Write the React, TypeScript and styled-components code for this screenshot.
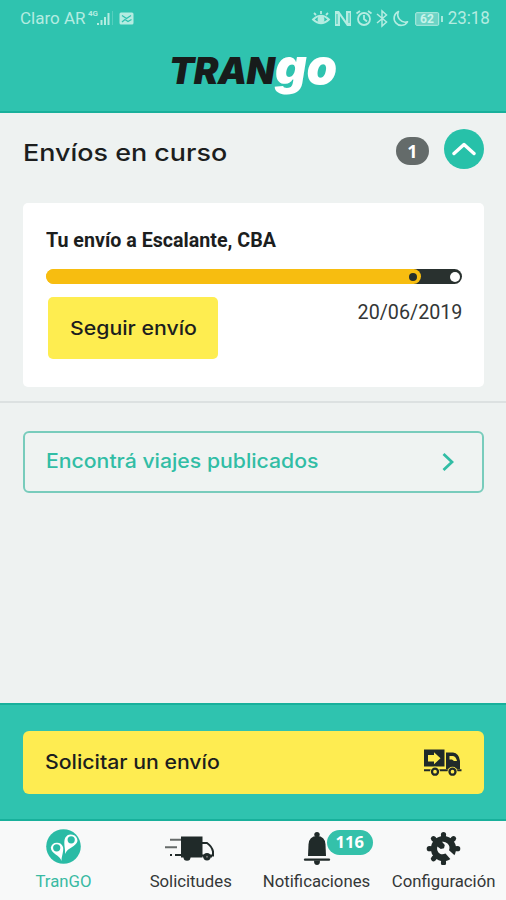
import React from "react";
import styled, { createGlobalStyle } from "styled-components";

const teal = "#2fc3af";
const ink = "#202a29";

const GlobalStyle = createGlobalStyle`
  *, *::before, *::after { box-sizing: border-box; }
  body { margin: 0; background: #eef2f1; }
  button { border: 0; padding: 0; text-align: left; color: inherit; cursor: pointer; }
  svg { display: block; flex: none; }
`;

const Screen = styled.div`
  width: 506px;
  height: 900px;
  display: flex;
  flex-direction: column;
  background: #eef2f1;
  color: #1c1e1e;
  font-family: Roboto, sans-serif;
  overflow: hidden;
`;

const Header = styled.header`
  height: 113px;
  background: ${teal};
  border-bottom: 2px solid #18b09b;
`;

const StatusBar = styled.div`
  height: 36px;
  padding: 0 16px 0 20px;
  display: flex;
  align-items: center;
  justify-content: space-between;
  color: #b4ece1;
`;

const StatusGroup = styled.div`
  display: flex;
  align-items: center;
`;

const Label = styled.span<{ $size: number; $weight?: number; $stretch?: number; $font?: string; $origin?: string }>`
  display: inline-block;
  margin: 0;
  white-space: nowrap;
  font-family: ${(p) => p.$font ?? "Roboto"}, sans-serif;
  font-size: ${(p) => p.$size}px;
  font-weight: ${(p) => p.$weight ?? 400};
  line-height: 1.2;
  transform: scaleX(${(p) => p.$stretch ?? 1});
  transform-origin: ${(p) => p.$origin ?? "left"} center;
`;

const Logo = styled.h1`
  margin: 6px 0 0 169px;
  height: 50px;
  display: flex;
  align-items: baseline;
  line-height: 50px;
  font-family: Inter, sans-serif;
  font-style: italic;
`;

const LogoDark = styled.span`
  width: 106px;
  font-size: 37px;
  font-weight: 900;
  letter-spacing: -0.7px;
  color: #171c1b;
`;

const LogoLight = styled.span`
  font-size: 49px;
  font-weight: 900;
  letter-spacing: -0.2px;
  color: #fff;
`;

const Shipments = styled.section`
  height: 290px;
  padding: 0 22px 0 23px;
  border-bottom: 2px solid #dce1e1;
`;

const SectionHead = styled.div`
  height: 90px;
  padding-bottom: 10px;
  display: flex;
  align-items: center;
`;

const Count = styled.span`
  width: 33px;
  height: 28px;
  margin: -5px 15px 0 auto;
  border-radius: 14px;
  display: grid;
  place-items: center;
  background: #646b6a;
  color: #fff;
  font: 700 18px/1 "Noto Sans", sans-serif;
`;

const Collapse = styled.button`
  width: 40px;
  height: 40px;
  margin-top: -8px;
  border-radius: 50%;
  display: grid;
  place-items: center;
  background: #27c1a9;
`;

const Card = styled.article`
  height: 184px;
  padding: 26px 22px 0 23px;
  border-radius: 5px;
  background: #fff;
`;

const Track = styled.div`
  height: 15px;
  margin-top: 17px;
  border-radius: 8px;
  display: flex;
  align-items: center;
  justify-content: space-between;
  padding-right: 2px;
  overflow: hidden;
  background: linear-gradient(to right, #f7bd10 50%, #29312f 50%);
`;

const Progress = styled.div`
  width: 375px;
  height: 15px;
  padding-right: 4px;
  border-radius: 8px;
  display: flex;
  align-items: center;
  justify-content: flex-end;
  background: #f7bd10;
`;

const Dot = styled.span<{ $size: number; $color: string }>`
  width: ${(p) => p.$size}px;
  height: ${(p) => p.$size}px;
  border-radius: 50%;
  background: ${(p) => p.$color};
`;

const CardFoot = styled.div`
  margin-top: 13px;
  display: flex;
  justify-content: space-between;
  align-items: flex-start;
`;

const FollowButton = styled.button`
  width: 170px;
  height: 62px;
  margin-left: 2px;
  padding: 3px 0 0 22px;
  border-radius: 5px;
  background: #feed50;
`;

const DateText = styled.time`
  margin-top: 3px;
  color: #333636;
`;

const Discover = styled.section`
  flex: 1;
  padding: 28px 22px 0 23px;
`;

const OutlineButton = styled.button`
  width: 100%;
  height: 62px;
  padding: 0 28px 0 21px;
  border: 2px solid #78ccbc;
  border-radius: 6px;
  display: flex;
  align-items: center;
  justify-content: space-between;
  background: #eff3f2;
  color: #31bda5;
`;

const ActionBar = styled.section`
  height: 118px;
  padding: 26px 22px 0 23px;
  border-top: 2px solid #18b09b;
  border-bottom: 2px solid #18b09b;
  background: ${teal};
`;

const RequestButton = styled.button`
  width: 100%;
  height: 63px;
  padding: 1px 22px 0;
  border-radius: 6px;
  display: flex;
  align-items: center;
  justify-content: space-between;
  background: #feec51;
`;

const Nav = styled.nav`
  height: 79px;
  display: grid;
  grid-template-columns: repeat(4, 1fr);
  background: #f8f9f9;
`;

const NavItem = styled.a<{ $active?: boolean }>`
  display: flex;
  flex-direction: column;
  align-items: center;
  padding-left: 1px;
  color: ${(p) => (p.$active ? "#39baa3" : "#343737")};
`;

const NavIcon = styled.span`
  position: relative;
  height: 50px;
  padding-top: 8px;
`;

const Badge = styled.span`
  position: absolute;
  left: 24px;
  top: 9px;
  width: 46px;
  height: 25px;
  border-radius: 13px;
  display: grid;
  place-items: center;
  background: #34c1aa;
  color: #fff;
  font: 700 16.5px/1 "Noto Sans", sans-serif;
`;

const SignalIcon = () => (
  <svg width="50" height="20" viewBox="0 0 50 20" fill="currentColor">
    <text x="2" y="8" fontFamily="Roboto, sans-serif" fontSize="8" fontWeight="700">4G</text>
    <rect x="11" y="15" width="2" height="2" />
    <rect x="14.5" y="12" width="2" height="5" />
    <rect x="18" y="9" width="2" height="8" />
    <rect x="21.5" y="5" width="2" height="12" />
    <rect x="26" y="3" width="1" height="14" opacity=".3" />
    <rect x="33.5" y="4.5" width="14" height="12" rx="1.5" />
    <path d="M36 7.5 L40.5 10.5 L45 7.5 M36 14 L39 11.5 L42 13.5 L45.5 11.5" fill="none" stroke={teal} strokeWidth="1.3" />
  </svg>
);

const SystemIcons = () => (
  <svg width="134" height="20" viewBox="310 0 134 20" fill="none" stroke="currentColor" strokeWidth="1.8">
    <path d="M312 11.5 Q320 4 328 11.5 Q320 19 312 11.5Z" />
    <circle cx="320" cy="11.5" r="2.5" fill="currentColor" />
    <path d="M313 5 L315 7 M320 3 V6 M327 5 L325 7" />
    <path d="M334 3 H338 L345 13 V3 H350 V18 H346 L339 8 V18 H334Z" fill="currentColor" stroke="none" />
    <path d="M336 6 V16 M348 5 V15" stroke={teal} strokeWidth="1" />
    <circle cx="363" cy="11" r="6" />
    <path d="M363 7 V11 L366 13.5 M355.5 5.5 L359 3 M367 3 L370.5 5.5" />
    <path d="M376 6 L385.5 14 L381 18 V3 L385.5 7 L376 15" strokeWidth="1.5" />
    <path d="M397.5 3.5 A7.2 7.2 0 1 0 406.5 13.8 A7.5 7.5 0 0 1 397.5 3.5Z" strokeWidth="1.6" strokeLinejoin="round" />
    <rect x="414.7" y="4.7" width="23" height="12.6" rx="1" strokeWidth="1" fill="#6bd3c5" />
    <path d="M441 8 V14" />
    <text x="419" y="15.2" fontFamily="Roboto, sans-serif" fontSize="12" fontWeight="700" fill="#c8f3ea" stroke="none">62</text>
  </svg>
);

const DeliveryTruck = () => (
  <svg width="38" height="28" viewBox="0 0 38 28">
    <rect x="0" y="0.5" width="20.5" height="17" fill={ink} />
    <path d="M4 6 H10 V3.3 L16.5 9.3 L10 15.3 V12.5 H4Z" fill="#feec51" />
    <path d="M22 3.5 H29 Q35 4 36 12 V20 H22Z" fill={ink} />
    <path d="M25.5 7 H29 Q32 7.5 33 12 H30 L28 10.5 H25.5Z" fill="#feec51" />
    <path d="M0 21.3 H37.5" stroke={ink} strokeWidth="2" />
    <g fill="#feec51" stroke={ink} strokeWidth="2.3">
      <circle cx="11" cy="22.7" r="5" stroke="none" />
      <circle cx="28.5" cy="22.7" r="5" stroke="none" />
      <circle cx="11" cy="22.7" r="3" />
      <circle cx="28.5" cy="22.7" r="3" />
    </g>
  </svg>
);

const PinsIcon = () => (
  <svg width="35" height="35" viewBox="0 0 35 35">
    <circle cx="17.5" cy="17.5" r="17.3" fill="#2abba5" />
    <path d="M15.5 32 C14 26 5 25 4.8 18.5 A6.4 6.4 0 0 1 17 18 C18 22 15.5 27 15.5 32Z" fill="#fff" />
    <path d="M19 25 C19.7 20 17 14 19.2 8.8 A6.6 6.6 0 0 1 31.5 12 C30 18 22 18 19 25Z" fill="#fff" />
    <circle cx="10.7" cy="18.8" r="3.6" fill="#2abba5" />
    <circle cx="25.2" cy="10.8" r="3.6" fill="#2abba5" />
  </svg>
);

const FastTruck = () => (
  <svg width="50" height="36" viewBox="0 0 50 36" fill="none" stroke={ink}>
    <rect x="16" y="7.5" width="21.5" height="21" fill={ink} stroke="none" />
    <path d="M5 10.8 H16 M0 18.3 H12" stroke="#666b6a" strokeWidth="2" />
    <path d="M5 26 H7 M10 26 H17" strokeWidth="2" />
    <path d="M37 14 H42 Q47 17.5 48 22.5 V26.5 H37" strokeWidth="2" />
    <path d="M38 27.5 H47" strokeWidth="2" />
    <circle cx="22" cy="28.3" r="3.5" fill={ink} stroke="none" />
    <circle cx="42" cy="27.8" r="3.7" fill={ink} stroke="none" />
    <circle cx="42" cy="27.8" r="1" fill="#777" stroke="none" />
  </svg>
);

const BellIcon = () => (
  <svg width="28" height="36" viewBox="0 0 28 36" fill={ink}>
    <circle cx="14" cy="5.6" r="2.7" />
    <path d="M5 27 L5.5 15.5 Q6 7 14 7 Q22 7 22.5 15.5 L23 27Z" />
    <path d="M1.5 29.6 H26.5 Q28 30.8 26.5 31.8 H1.5 Q0 30.8 1.5 29.6Z" />
    <path d="M11 31.4 H17 Q17 36 14 36 Q11 36 11 31.4Z" />
  </svg>
);

const GearIcon = () => (
  <svg width="35" height="36" viewBox="0 0 35 36">
    <circle cx="17.5" cy="19.7" r="12.6" fill={ink} />
    {[0, 45, 90, 180, 225, 270, 315].map((a) => (
      <g key={a} transform={`rotate(${a} 17.5 19.7)`}>
        <circle cx="17.5" cy="5.5" r="2.6" fill={ink} />
        <rect x="15.1" y="5.5" width="4.8" height="5" fill={ink} />
      </g>
    ))}
    <path
      d="M16 12.8 L18.8 16.1 L18 19.3 L14.8 20.1 L11.3 17.5 Q10.3 22.3 14 24.8 Q16.5 26 19.5 24.5 L26.5 32.5 L31 28.5 L23 21.3 Q24.5 17.3 21.5 14.5 Q19 12.3 16 12.8Z"
      fill="#f8f9f9"
    />
  </svg>
);

export default function App() {
  return (
    <>
      <GlobalStyle />
      <Screen>
        <Header>
          <StatusBar>
            <StatusGroup>
              <Label $size={17}>Claro AR</Label>
              <SignalIcon />
            </StatusGroup>
            <StatusGroup>
              <SystemIcons />
              <Label $size={18} $origin="right" $stretch={0.94}>23:18</Label>
            </StatusGroup>
          </StatusBar>
          <Logo><LogoDark>TRAN</LogoDark><LogoLight>go</LogoLight></Logo>
        </Header>
        <Shipments>
          <SectionHead>
            <Label as="h2" $font="Inter" $size={23.5} $weight={500} $stretch={1.145}>Envíos en curso</Label>
            <Count>1</Count>
            <Collapse aria-label="Contraer">
              <svg width="24" height="14" viewBox="0 0 24 14" fill="none" stroke="#fff" strokeWidth="3.4" strokeLinecap="round" strokeLinejoin="round">
                <path d="M2 11.5 L12 2.5 L22 11.5" />
              </svg>
            </Collapse>
          </SectionHead>
          <Card>
            <Label $size={19.5} $weight={700} $stretch={1.008}>Tu envío a Escalante, CBA</Label>
            <Track>
              <Progress><Dot $size={8} $color="#252e2c" /></Progress>
              <Dot $size={10} $color="#fff" />
            </Track>
            <CardFoot>
              <FollowButton>
                <Label $font="Inter" $size={19} $weight={500} $stretch={1.12}>Seguir envío</Label>
              </FollowButton>
              <DateText><Label $size={20} $origin="right" $stretch={0.985}>20/06/2019</Label></DateText>
            </CardFoot>
          </Card>
        </Shipments>
        <Discover>
          <OutlineButton>
            <Label $font="Inter" $size={19.5} $weight={500} $stretch={1.088}>Encontrá viajes publicados</Label>
            <svg width="12" height="20" viewBox="0 0 12 20" fill="none" stroke="currentColor" strokeWidth="2.8">
              <path d="M1.5 2 L10 10 L1.5 18" />
            </svg>
          </OutlineButton>
        </Discover>
        <ActionBar>
          <RequestButton>
            <Label $font="Inter" $size={19.5} $weight={500} $stretch={1.09}>Solicitar un envío</Label>
            <DeliveryTruck />
          </RequestButton>
        </ActionBar>
        <Nav>
          <NavItem $active>
            <NavIcon><PinsIcon /></NavIcon>
            <Label $size={17} $origin="center" $stretch={0.985}>TranGO</Label>
          </NavItem>
          <NavItem>
            <NavIcon><FastTruck /></NavIcon>
            <Label $size={17} $origin="center" $stretch={0.985}>Solicitudes</Label>
          </NavItem>
          <NavItem>
            <NavIcon><BellIcon /><Badge>116</Badge></NavIcon>
            <Label $size={17} $origin="center" $stretch={0.985}>Notificaciones</Label>
          </NavItem>
          <NavItem>
            <NavIcon><GearIcon /></NavIcon>
            <Label $size={17} $origin="center" $stretch={0.985}>Configuración</Label>
          </NavItem>
        </Nav>
      </Screen>
    </>
  );
}
